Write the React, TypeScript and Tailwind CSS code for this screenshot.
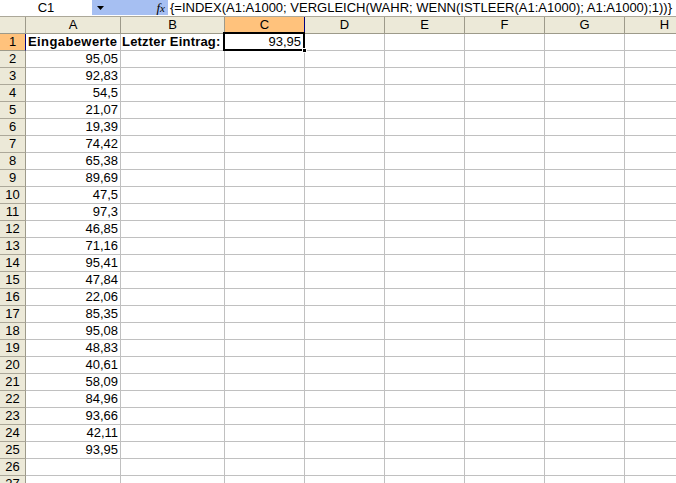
import React from 'react'

const cols = ['A', 'B', 'C', 'D', 'E', 'F', 'G', 'H']

const values = [
  '95,05', '92,83', '54,5', '21,07', '19,39', '74,42', '65,38', '89,69',
  '47,5', '97,3', '46,85', '71,16', '95,41', '47,84', '22,06', '85,35',
  '95,08', '48,83', '40,61', '58,09', '84,96', '93,66', '42,11', '93,95',
]

const font = { fontFamily: '"Liberation Sans", Arial, sans-serif' }

function FormulaBar() {
  return (
    <div className="flex h-[17px] flex-col">
      <div className="flex h-[15px] text-[13px] leading-[15px] text-black">
        <div className="w-[92px] bg-white text-center">C1</div>
        <div className="flex w-[76px] items-center bg-[#a6bff2]">
          <svg width="7" height="4" viewBox="0 0 7 4" className="ml-[5px]">
            <path d="M0 0h7L3.5 4z" fill="#000" />
          </svg>
          <span
            className="ml-auto mr-[3px] text-[13px] italic"
            style={{ fontFamily: '"Liberation Serif", serif' }}
          >
            f<span className="text-[11px]">x</span>
          </span>
        </div>
        <div className="flex-1 bg-white pl-[2px] whitespace-nowrap">
          {'{=INDEX(A1:A1000; VERGLEICH(WAHR; WENN(ISTLEER(A1:A1000); A1:A1000);1))}'}
        </div>
      </div>
      <div className="h-px bg-white" />
      <div className="h-px bg-[#aca899]" />
    </div>
  )
}

function Grid() {
  const rows = Array.from({ length: 27 }, (_, i) => i + 1)
  return (
    <div className="grid w-max grid-cols-[26px_95px_104px_80px_80px_80px_80px_80px_80px] auto-rows-[17px] text-[13px] leading-[16px] text-black">
      {/* header row */}
      <div className="border-r border-b border-[#9d9a8a] bg-[#ece9d8]" />
      {cols.map((c) => (
        <div
          key={c}
          className={
            c === 'C'
              ? 'border-r border-b border-r-[#000080] border-b-[#000080] bg-[#ffc27c] text-center'
              : 'border-r border-b border-[#9d9a8a] bg-[#ece9d8] text-center'
          }
        >
          {c}
        </div>
      ))}

      {rows.map((r) => (
        <React.Fragment key={r}>
          <div
            className={
              r === 1
                ? 'border-r border-b border-r-[#000080] border-b-[#9d9a8a] bg-[#ffc27c] text-center'
                : 'border-r border-b border-r-[#9d9a8a] border-b-[#aca899] bg-[#ece9d8] text-center'
            }
          >
            {r}
          </div>
          {cols.map((c) => {
            let content: React.ReactNode = null
            let cls = 'border-r border-b border-[#c0c0c0] bg-white whitespace-nowrap'
            if (r === 1 && c === 'A') {
              content = 'Eingabewerte'
              cls += ' pl-[2px] font-bold tracking-[0.4px]'
            } else if (r === 1 && c === 'B') {
              content = 'Letzter Eintrag:'
              cls += ' pl-[1px] font-bold tracking-[0.2px]'
            } else if (r === 1 && c === 'C') {
              content = '93,95'
              cls += ' relative pr-[3px] text-right'
            } else if (c === 'A' && r >= 2 && r <= 25) {
              content = values[r - 2]
              cls += ' pr-[2px] text-right'
            }
            return (
              <div key={c} className={cls}>
                {content}
                {r === 1 && c === 'C' && (
                  <>
                    <div className="pointer-events-none absolute -left-[2px] -top-[2px] right-[-1px] bottom-[-1px] border-2 border-black" />
                    <div className="absolute right-[-3px] bottom-[-3px] h-[5px] w-[5px] border border-white bg-black" />
                  </>
                )}
              </div>
            )
          })}
        </React.Fragment>
      ))}
    </div>
  )
}

export default function App() {
  return (
    <div className="h-[483px] w-[676px] overflow-hidden bg-white" style={font}>
      <FormulaBar />
      <Grid />
    </div>
  )
}
